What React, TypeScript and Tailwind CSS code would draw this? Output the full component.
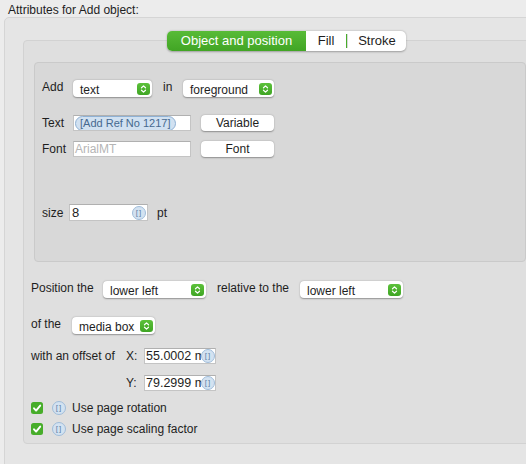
import React from "react"

const font = "font-['Liberation_Sans',Arial,sans-serif]"

function Stepper() {
  return (
    <svg width="13" height="12" viewBox="0 0 13 12" className="shrink-0">
      <defs>
        <linearGradient id="stp" x1="0" y1="0" x2="0" y2="1">
          <stop offset="0" stopColor="#5cc13a" />
          <stop offset="1" stopColor="#3fa524" />
        </linearGradient>
      </defs>
      <rect x="0" y="0" width="13" height="12" rx="3" fill="url(#stp)" />
      <path d="M4.5 4.8 L6.5 2.9 L8.5 4.8" fill="none" stroke="white" strokeWidth="1.2" strokeLinecap="round" strokeLinejoin="round" />
      <path d="M4.5 7.2 L6.5 9.1 L8.5 7.2" fill="none" stroke="white" strokeWidth="1.2" strokeLinecap="round" strokeLinejoin="round" />
    </svg>
  )
}

function Popup({ label, w }: { label: string; w: string }) {
  return (
    <div className={`${w} h-[17px] shrink-0 flex items-center justify-between bg-white rounded-[4px] shadow-[0_0.5px_1.5px_rgba(0,0,0,0.35)] pl-[7px] pr-[2px]`}>
      <span className="text-[12px] leading-[14px] text-[#1e1e1e] pt-[2px]">{label}</span>
      <Stepper />
    </div>
  )
}

function Button({ label }: { label: string }) {
  return (
    <div className="w-[73px] h-[16px] shrink-0 flex items-center justify-center bg-white rounded-[4px] shadow-[0_0.5px_1.5px_rgba(0,0,0,0.35)] text-[12px] text-[#1e1e1e]">
      {label}
    </div>
  )
}

function TokenIcon() {
  return (
    <div className="w-[14px] h-[14px] shrink-0 rounded-full bg-[#d3e2f1] border border-[#9fbcd9] flex items-center justify-center text-[8px] leading-none text-[#5d7fa3] tracking-[1px]">
      []
    </div>
  )
}

function Field({ w, h, children }: { w: string; h: string; children?: React.ReactNode }) {
  return (
    <div className={`${w} ${h} shrink-0 flex items-center bg-white border border-[#c4c4c4] border-t-[#b0b0b0] overflow-hidden`}>
      {children}
    </div>
  )
}

function Check() {
  return (
    <svg width="12" height="12" viewBox="0 0 12 12" className="shrink-0">
      <rect x="0" y="0" width="12" height="12" rx="2.5" fill="#47ad2a" />
      <path d="M3 6.3 L5.1 8.6 L9.2 3.6" fill="none" stroke="white" strokeWidth="1.9" strokeLinecap="round" strokeLinejoin="round" />
    </svg>
  )
}

function OffsetField({ value }: { value: string }) {
  return (
    <Field w="w-[72px]" h="h-[16px]">
      <span className="pl-[1px] w-[56px] overflow-hidden whitespace-nowrap text-[12.5px] leading-[14px]">{value}</span>
      <TokenIcon />
    </Field>
  )
}

export default function App() {
  return (
    <div className={`w-[526px] h-[464px] overflow-hidden bg-[#ececec] text-[#1e1e1e] ${font}`}>
      <div className="h-[17px] pl-[8px] pt-[3px] text-[12px] leading-[14px]">Attributes for Add object:</div>

      <div className="ml-[4px] w-[560px] h-[460px] border border-[#d5d5d5] rounded-[5px] bg-[#e5e5e5]">
        {/* tabs */}
        <div className="relative z-10 ml-[162px] mt-[13px] -mb-[11px] flex h-[20px] w-[239px] rounded-[5px] bg-white shadow-[0_0.5px_2px_rgba(0,0,0,0.3)] text-[13px] overflow-hidden">
          <div className="w-[139px] flex items-center justify-center text-white bg-gradient-to-b from-[#58bb37] to-[#41a524]">
            Object and position
          </div>
          <div className="w-[40px] flex items-center justify-center">Fill</div>
          <div className="w-[1px] my-[3px] bg-[#47ad2a]" />
          <div className="w-[1px] my-[3px] bg-[#d8d8d8]" />
          <div className="flex-1 flex items-center justify-center">Stroke</div>
        </div>

        {/* tab content */}
        <div className="ml-[18px] h-[404px] border border-[#d2d2d2] rounded-[4px] bg-[#dfdfdf] pt-[21px]">
          {/* group box */}
          <div className="ml-[10px] w-[492px] h-[200px] border border-[#cacaca] rounded-[4px] bg-[#d8d8d8] pl-[7px] flex flex-col text-[12px]">
            <div className="mt-[17px] h-[17px] flex items-center">
              <span className="w-[31px] self-start leading-[14px]">Add</span>
              <Popup label="text" w="w-[79px]" />
              <span className="ml-[11px] w-[20px] self-start leading-[14px]">in</span>
              <Popup label="foreground" w="w-[91px]" />
            </div>
            <div className="mt-[18px] h-[16px] flex items-center">
              <span className="w-[31px]">Text</span>
              <Field w="w-[118px]" h="h-[16px]">
                <div className="ml-[1px] h-[15px] px-[4px] flex items-center rounded-full bg-[#d1e1f1] border border-[#8fb1d4] text-[11px] text-[#46698f]">
                  [Add Ref No 1217]
                </div>
              </Field>
              <div className="ml-[10px]">
                <Button label="Variable" />
              </div>
            </div>
            <div className="mt-[10px] h-[16px] flex items-center">
              <span className="w-[31px]">Font</span>
              <Field w="w-[118px]" h="h-[16px]">
                <span className="pl-[1px] text-[12px] text-[#b5b5b5]">ArialMT</span>
              </Field>
              <div className="ml-[10px]">
                <Button label="Font" />
              </div>
            </div>
            <div className="mt-[47px] h-[17px] flex items-center">
              <span className="w-[27px]">size</span>
              <Field w="w-[79px]" h="h-[17px]">
                <span className="pl-[2px] text-[13px] flex-1">8</span>
                <div className="mr-[1px]">
                  <TokenIcon />
                </div>
              </Field>
              <span className="ml-[9px]">pt</span>
            </div>
          </div>

          {/* position */}
          <div className="pl-[7px] flex flex-col text-[12px]">
            <div className="mt-[19px] h-[17px] flex items-center">
              <span className="w-[72px] self-start leading-[14px]">Position the</span>
              <Popup label="lower left" w="w-[103px]" />
              <span className="ml-[11px] w-[83px] self-start leading-[14px]">relative to the</span>
              <Popup label="lower left" w="w-[103px]" />
            </div>
            <div className="mt-[19px] h-[17px] flex items-center">
              <span className="w-[41px] self-start leading-[14px]">of the</span>
              <Popup label="media box" w="w-[83px]" />
            </div>
            <div className="mt-[14px] h-[16px] flex items-center">
              <span className="w-[95px]">with an offset of</span>
              <span className="w-[18px]">X:</span>
              <OffsetField value="55.0002 mm" />
            </div>
            <div className="mt-[11px] h-[16px] flex items-center">
              <span className="w-[95px]" />
              <span className="w-[18px]">Y:</span>
              <OffsetField value="79.2999 mm" />
            </div>
            <div className="mt-[10px] h-[14px] flex items-center">
              <Check />
              <div className="ml-[9px]">
                <TokenIcon />
              </div>
              <span className="ml-[6px]">Use page rotation</span>
            </div>
            <div className="mt-[7px] h-[14px] flex items-center">
              <Check />
              <div className="ml-[9px]">
                <TokenIcon />
              </div>
              <span className="ml-[6px]">Use page scaling factor</span>
            </div>
          </div>
        </div>
      </div>
    </div>
  )
}
